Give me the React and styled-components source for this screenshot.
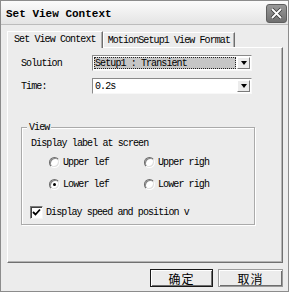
import React from "react";
import styled, { createGlobalStyle } from "styled-components";

const Global = createGlobalStyle`
  html, body { margin: 0; padding: 0; background: #ececec; }
  * { box-sizing: border-box; }
`;

const mono = `"Liberation Mono", "DejaVu Sans Mono", monospace`;

const Window = styled.div`
  width: 289px;
  height: 292px;
  border: 1px solid #8c8c8c;
  background: #ececec;
  display: flex;
  flex-direction: column;
  font-family: ${mono};
  font-size: 10px;
  letter-spacing: -0.9px;
  color: #000;
  overflow: hidden;
`;

const TitleBar = styled.div`
  height: 24px;
  flex: none;
  display: flex;
  align-items: center;
  justify-content: space-between;
  padding: 0 1px 0 5px;
  background: linear-gradient(#fbfbfb, #e4e4e4);
  border-bottom: 1px solid #bcbcbc;
`;

const Title = styled.span`
  font-weight: bold;
  font-size: 11px;
  letter-spacing: 0;
  margin-top: 2px;
`;

const CloseBtn = styled.div`
  width: 21px;
  height: 19px;
  margin-top: 2px;
  border-radius: 3px;
  border: 1px solid #5e5e5e;
  background: linear-gradient(#999, #707070);
  display: flex;
  align-items: center;
  justify-content: center;
`;

const Content = styled.div`
  flex: 1;
  display: flex;
  flex-direction: column;
  padding: 5px 5px 0 6px;
`;

const TabStrip = styled.div`
  display: flex;
  align-items: flex-end;
  height: 17px;
  flex: none;
  position: relative;
  z-index: 1;
`;

const Tab = styled.div`
  height: ${(p) => (p.$active ? "17px" : "15px")};
  padding: 0 ${(p) => (p.$active ? "6px" : "4px")};
  display: flex;
  align-items: center;
  background: #ececec;
  border-top: 1px solid #fff;
  border-left: 1px solid #fff;
  border-right: 1px solid #6e6e6e;
  box-shadow: inset -1px 0 0 #b0b0b0;
  margin-bottom: ${(p) => (p.$active ? "-1px" : "0")};
  padding-bottom: ${(p) => (p.$active ? "1px" : "0")};
`;

const Panel = styled.div`
  height: 216px;
  flex: none;
  border-top: 1px solid #fff;
  border-left: 1px solid #fff;
  border-right: 1px solid #707070;
  border-bottom: 1px solid #707070;
  box-shadow: inset -1px -1px 0 #b4b4b4;
  padding: 7px 0 0 13px;
  display: flex;
  flex-direction: column;
`;

const FieldRow = styled.div`
  display: flex;
  align-items: center;
  height: 16px;
  margin-bottom: 7px;
`;

const FieldLabel = styled.span`
  width: 71px;
`;

const Combo = styled.div`
  width: 160px;
  height: 16px;
  display: flex;
  border-top: 1px solid #8a8a8a;
  border-left: 1px solid #8a8a8a;
  border-right: 1px solid #f8f8f8;
  border-bottom: 1px solid #f8f8f8;
  background: #fff;
  padding: 1px;
`;

const ComboText = styled.div`
  flex: 1;
  display: flex;
  align-items: center;
  padding-left: 1px;
  background: ${(p) => (p.$focus ? "#c6c6c6" : "#fff")};
  outline: ${(p) => (p.$focus ? "1px dotted #222" : "none")};
  outline-offset: -1px;
  margin-right: 1px;
`;

const DropBtn = styled.div`
  width: 13px;
  flex: none;
  background: #ececec;
  border-top: 1px solid #fff;
  border-left: 1px solid #fff;
  border-right: 1px solid #7a7a7a;
  border-bottom: 1px solid #7a7a7a;
  display: flex;
  align-items: center;
  justify-content: center;
`;

const Arrow = styled.div`
  width: 0;
  height: 0;
  border-left: 3px solid transparent;
  border-right: 3px solid transparent;
  border-top: 4px solid #000;
`;

const Group = styled.div`
  position: relative;
  margin-top: 26px;
  width: 234px;
  height: 98px;
  border: 1px solid #aaaaaa;
  box-shadow: inset 1px 1px 0 #fff, 1px 1px 0 #fff;
  padding: 10px 0 0 9px;
  display: flex;
  flex-direction: column;
`;

const Legend = styled.span`
  position: absolute;
  top: -6px;
  left: 5px;
  padding: 0 2px;
  background: #ececec;
  line-height: 11px;
`;

const GroupText = styled.div`
  line-height: 12px;
  height: 12px;
`;

const RadioGrid = styled.div`
  display: grid;
  grid-template-columns: 95px 90px;
  row-gap: 8px;
  margin: 5px 0 0 18px;
`;

const Choice = styled.label`
  display: flex;
  align-items: center;
  gap: 3px;
  height: 14px;
`;

const RadioDot = styled.span`
  width: 11px;
  height: 11px;
  border-radius: 50%;
  background: #fff;
  box-shadow: inset 1px 1px 0 #8a8a8a, inset -1px -1px 0 #e0e0e0;
  border: 1px solid transparent;
  border-top-color: #6a6a6a;
  border-left-color: #6a6a6a;
  display: flex;
  align-items: center;
  justify-content: center;
  &::after {
    content: "";
    width: 3px;
    height: 3px;
    border-radius: 50%;
    background: ${(p) => (p.$checked ? "#000" : "transparent")};
  }
`;

const CheckRow = styled.label`
  display: flex;
  align-items: center;
  gap: 3px;
  height: 14px;
  margin: 14px 0 0 -1px;
`;

const CheckBox = styled.span`
  width: 13px;
  height: 13px;
  background: #fff;
  border-top: 1px solid #7a7a7a;
  border-left: 1px solid #7a7a7a;
  border-right: 1px solid #f4f4f4;
  border-bottom: 1px solid #f4f4f4;
  box-shadow: inset 1px 1px 0 #404040;
  display: flex;
  align-items: center;
  justify-content: center;
`;

const ButtonRow = styled.div`
  display: flex;
  justify-content: flex-end;
  gap: 5px;
  margin-top: 6px;
`;

const Button = styled.div`
  width: ${(p) => p.$w}px;
  height: 18px;
  display: flex;
  align-items: center;
  justify-content: center;
  font-family: "Noto Sans CJK SC", sans-serif;
  font-size: 12px;
  letter-spacing: 1px;
  background: #ececec;
  border: 1px solid ${(p) => (p.$default ? "#1a1a1a" : "transparent")};
  box-shadow: inset 1px 1px 0 #fff, inset -1px -1px 0 #6e6e6e;
  outline: ${(p) => (p.$default ? "none" : "1px solid #9a9a9a")};
  outline-offset: -1px;
`;

export default function App() {
  return (
    <>
      <Global />
      <Window>
        <TitleBar>
          <Title>Set View Context</Title>
          <CloseBtn>
            <svg width="13" height="13" viewBox="0 0 13 13">
              <path d="M2 2 L11 11 M11 2 L2 11" stroke="#3a3a3a" strokeWidth="3.4" />
              <path d="M2 2 L11 11 M11 2 L2 11" stroke="#fff" strokeWidth="1.8" />
            </svg>
          </CloseBtn>
        </TitleBar>
        <Content>
          <TabStrip>
            <Tab $active>Set View Context</Tab>
            <Tab>MotionSetup1 View Format</Tab>
          </TabStrip>
          <Panel>
            <FieldRow>
              <FieldLabel>Solution</FieldLabel>
              <Combo>
                <ComboText $focus>Setup1 : Transient</ComboText>
                <DropBtn><Arrow /></DropBtn>
              </Combo>
            </FieldRow>
            <FieldRow>
              <FieldLabel>Time:</FieldLabel>
              <Combo>
                <ComboText>0.2s</ComboText>
                <DropBtn><Arrow /></DropBtn>
              </Combo>
            </FieldRow>
            <Group>
              <Legend>View</Legend>
              <GroupText>Display label at screen</GroupText>
              <RadioGrid>
                <Choice><RadioDot />Upper lef</Choice>
                <Choice><RadioDot />Upper righ</Choice>
                <Choice><RadioDot $checked />Lower lef</Choice>
                <Choice><RadioDot />Lower righ</Choice>
              </RadioGrid>
              <CheckRow>
                <CheckBox>
                  <svg width="9" height="9" viewBox="0 0 9 9">
                    <path d="M1 4 L3.5 6.5 L8 1.5" stroke="#000" strokeWidth="1.8" fill="none" />
                  </svg>
                </CheckBox>
                Display speed and position v
              </CheckRow>
            </Group>
          </Panel>
          <ButtonRow>
            <Button $default $w={63}>确定</Button>
            <Button $w={65}>取消</Button>
          </ButtonRow>
        </Content>
      </Window>
    </>
  );
}
